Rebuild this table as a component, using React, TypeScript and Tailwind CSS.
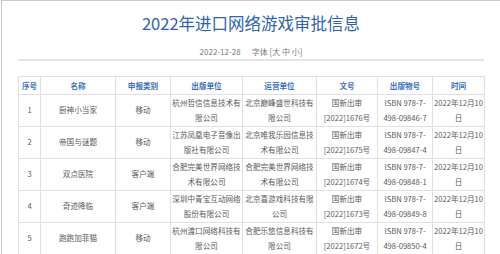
const rows = [
  {
    no: "1",
    name: "厨神小当家",
    type: "移动",
    pub: ["杭州哲信信息技术有", "限公司"],
    op: ["北京巅峰盛世科技有", "限公司"],
    doc: "[2022]1676号",
    isbn: "498-09846-7",
  },
  {
    no: "2",
    name: "帝国与谜题",
    type: "移动",
    pub: ["江苏凤凰电子音像出", "版社有限公司"],
    op: ["北京唯我乐园信息技", "术有限公司"],
    doc: "[2022]1675号",
    isbn: "498-09847-4",
  },
  {
    no: "3",
    name: "双点医院",
    type: "客户端",
    pub: ["合肥完美世界网络技", "术有限公司"],
    op: ["合肥完美世界网络技", "术有限公司"],
    doc: "[2022]1674号",
    isbn: "498-09848-1",
  },
  {
    no: "4",
    name: "奇迹降临",
    type: "客户端",
    pub: ["深圳中青宝互动网络", "股份有限公司"],
    op: ["北京喜游戏科技有限", "公司"],
    doc: "[2022]1673号",
    isbn: "498-09849-8",
  },
  {
    no: "5",
    name: "跑跑加菲猫",
    type: "移动",
    pub: ["杭州渡口网络科技有", "限公司"],
    op: ["合肥乐悠信息科技有", "限公司"],
    doc: "[2022]1672号",
    isbn: "498-09850-4",
  },
];

const headers = ["序号", "名称", "申报类别", "出版单位", "运营单位", "文号", "出版物号", "时间"];

const Two = ({ a, b }: { a: string; b: string }) => (
  <>
    {a}
    <br />
    {b}
  </>
);

export default function App() {
  return (
    <div className="w-[500px] h-[254px] overflow-hidden bg-white font-['Noto_Sans_CJK_SC','Noto_Sans',sans-serif]">
      <div className="ml-[1px] h-full border-l border-t border-[#c8c8c8] px-[16px] pt-[9.5px]">
        <h1 className="text-center text-[16.5px] leading-[24px] text-[#2f63ad]">
          2022年进口网络游戏审批信息
        </h1>
        <div className="mt-[11px] flex justify-center gap-[11px] text-[8px] leading-[12px] text-[#7a7a7a]">
          <span>2022-12-28</span>
          <span>字体 [大 中 小]</span>
        </div>
        <div className="mt-[1.5px] h-[2px] bg-[#e4e4e4]" />

        <table className="mt-[15px] w-full table-fixed border-collapse text-center text-[7.6px] leading-[15.5px] text-[#5a5a5a]">
          <colgroup>
            <col className="w-[22px]" />
            <col className="w-[75px]" />
            <col className="w-[55px]" />
            <col className="w-[72px]" />
            <col className="w-[74px]" />
            <col className="w-[61px]" />
            <col className="w-[55px]" />
            <col className="w-[52px]" />
          </colgroup>
          <thead>
            <tr>
              {headers.map((h) => (
                <th
                  key={h}
                  className="border border-[#e0e0e0] py-[0.5px] font-bold text-[#3a70bb]"
                >
                  {h}
                </th>
              ))}
            </tr>
          </thead>
          <tbody>
            {rows.map((r) => (
              <tr key={r.no}>
                <td className="border border-[#e0e0e0]">{r.no}</td>
                <td className="border border-[#e0e0e0]">{r.name}</td>
                <td className="border border-[#e0e0e0]">{r.type}</td>
                <td className="border border-[#e0e0e0] whitespace-nowrap">
                  <Two a={r.pub[0]} b={r.pub[1]} />
                </td>
                <td className="border border-[#e0e0e0] whitespace-nowrap">
                  <Two a={r.op[0]} b={r.op[1]} />
                </td>
                <td className="border border-[#e0e0e0] whitespace-nowrap">
                  <Two a="国新出审" b={r.doc} />
                </td>
                <td className="border border-[#e0e0e0] whitespace-nowrap">
                  <Two a="ISBN 978-7-" b={r.isbn} />
                </td>
                <td className="border border-[#e0e0e0] whitespace-nowrap">
                  <Two a="2022年12月10" b="日" />
                </td>
              </tr>
            ))}
          </tbody>
        </table>
      </div>
    </div>
  );
}
